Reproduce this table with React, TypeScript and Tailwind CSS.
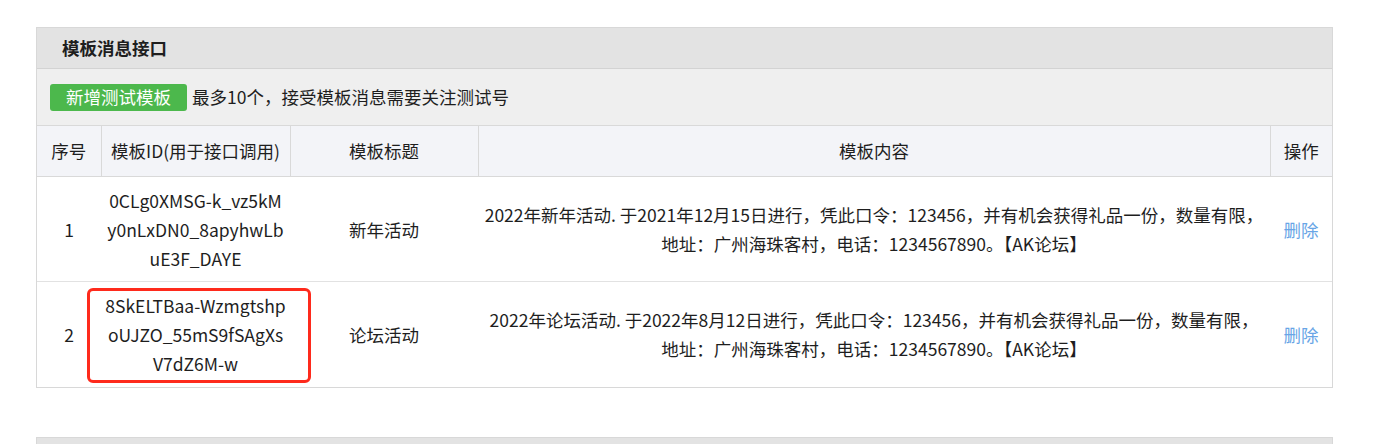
const rows = [
  {
    no: 1,
    id: ["0CLg0XMSG-k_vz5kM", "y0nLxDN0_8apyhwLb", "uE3F_DAYE"],
    title: "新年活动",
    content: ["2022年新年活动. 于2021年12月15日进行，凭此口令：123456，并有机会获得礼品一份，数量有限，", "地址：广州海珠客村，电话：1234567890。【AK论坛】"],
  },
  {
    no: 2,
    id: ["8SkELTBaa-Wzmgtshp", "oUJZO_55mS9fSAgXs", "V7dZ6M-w"],
    title: "论坛活动",
    content: ["2022年论坛活动. 于2022年8月12日进行，凭此口令：123456，并有机会获得礼品一份，数量有限，", "地址：广州海珠客村，电话：1234567890。【AK论坛】"],
    marked: true,
  },
];

export default function App() {
  return (
    <div className="min-h-[444px] bg-white pt-[27px] text-[17.5px] text-[#1e1e1e]" style={{ fontFamily: '"Noto Sans CJK SC", "Noto Sans", sans-serif' }}>
      <div className="ml-[36px] w-[1297px] border border-[#d8d8d8]">
        <div className="flex h-[41px] items-center border-b border-[#d3d3d3] bg-[#e3e3e3] px-[25px] font-bold">模板消息接口</div>
        <div className="flex h-[56px] items-center gap-[5px] bg-[#efefef] px-[13px]">
          <button className="h-[27px] w-[137px] rounded-[3px] bg-[#4cb84c] text-white">新增测试模板</button>
          <span>最多10个，接受模板消息需要关注测试号</span>
        </div>
        <table className="w-full table-fixed border-collapse text-center">
          <colgroup>
            <col className="w-[64px]" />
            <col className="w-[189px]" />
            <col className="w-[188px]" />
            <col className="w-[792px]" />
            <col className="w-[62px]" />
          </colgroup>
          <thead>
            <tr className="h-[51px] border-y border-[#d9d9d9] bg-[#f3f4f8]">
              <th className="border-r border-[#d9d9d9] font-normal">序号</th>
              <th className="border-r border-[#d9d9d9] font-normal">模板ID(用于接口调用)</th>
              <th className="border-r border-[#d9d9d9] font-normal">模板标题</th>
              <th className="border-r border-[#d9d9d9] font-normal">模板内容</th>
              <th className="font-normal">操作</th>
            </tr>
          </thead>
          <tbody className="leading-[29px]">
            {rows.map((r, i) => (
              <tr key={r.no} className={i === 0 ? "h-[105px] border-b border-[#e2e2e2]" : "h-[105px]"}>
                <td>{r.no}</td>
                <td className="relative whitespace-nowrap">
                  {r.id.map((line) => (
                    <span key={line} className="block">{line}</span>
                  ))}
                  {r.marked ? (
                    <div className="pointer-events-none absolute left-[-14px] top-[6px] h-[95px] w-[224px] rounded-[6px] border-[3px] border-[#fe2a1c]" />
                  ) : null}
                </td>
                <td>{r.title}</td>
                <td className="whitespace-nowrap">
                  {r.content.map((line) => (
                    <span key={line} className="block">{line}</span>
                  ))}
                </td>
                <td className="text-[#68a5e6]">删除</td>
              </tr>
            ))}
          </tbody>
        </table>
      </div>
      <div className="ml-[36px] mt-[49px] h-[20px] w-[1297px] border border-[#d8d8d8] bg-[#e3e3e3]" />
    </div>
  );
}
